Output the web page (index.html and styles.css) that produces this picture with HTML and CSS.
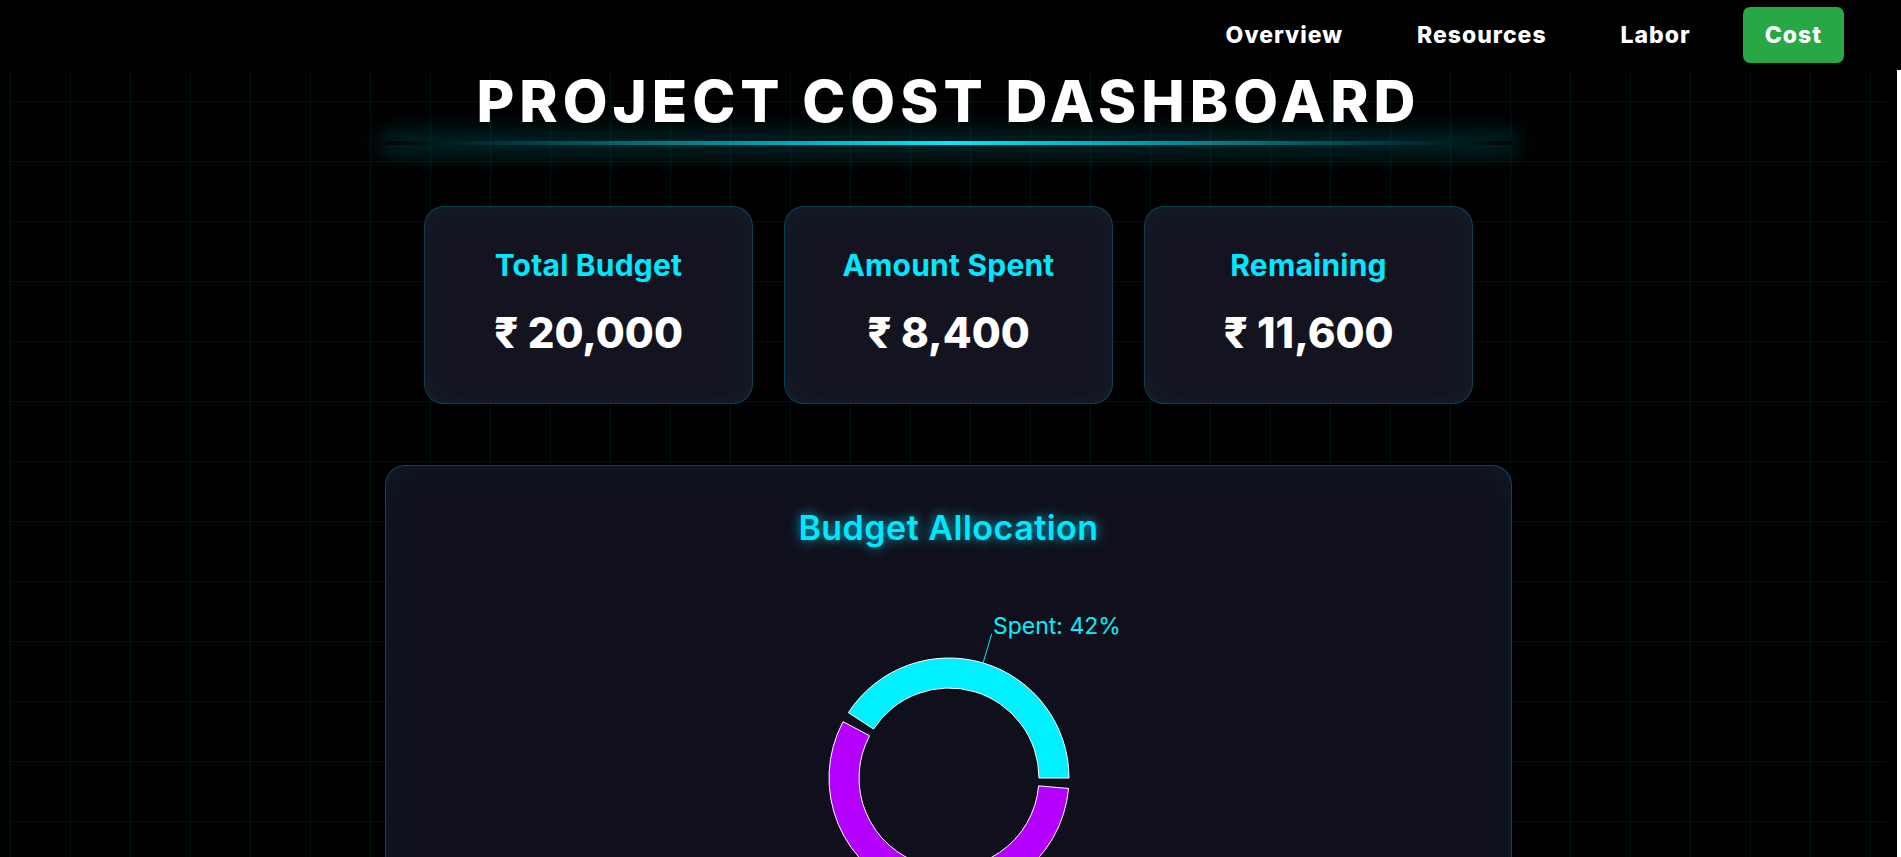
FILE: index.html
```html
<!DOCTYPE html>
<html lang="en">
<head>
<meta charset="utf-8">
<title>Project Cost Dashboard</title>
<link rel="stylesheet" href="styles.css">
</head>
<body>
<nav class="topnav">
  <a class="nav-link" href="#">Overview</a>
  <a class="nav-link" href="#">Resources</a>
  <a class="nav-link" href="#">Labor</a>
  <a class="nav-link active" href="#">Cost</a>
</nav>
<main class="page">
  <div class="grid">
    <div class="container">
      <header class="title-block">
        <h1 class="title">PROJECT COST DASHBOARD</h1>
        <div class="title-bar"></div>
      </header>
      <section class="stats">
        <div class="stat-card">
          <h3 class="stat-label">Total Budget</h3>
          <p class="stat-value">₹ 20,000</p>
        </div>
        <div class="stat-card">
          <h3 class="stat-label">Amount Spent</h3>
          <p class="stat-value">₹ 8,400</p>
        </div>
        <div class="stat-card">
          <h3 class="stat-label">Remaining</h3>
          <p class="stat-value">₹ 11,600</p>
        </div>
      </section>
      <section class="chart-panel">
        <h2 class="chart-title">Budget Allocation</h2>
        <svg class="donut" width="500" height="400" viewBox="0 0 500 400">
          <path class="slice-spent" d="M 370 200 A 120 120 0 0 0 149.36 134.65 L 174.52 150.99 A 90 90 0 0 1 340 200 Z"/>
          <path class="slice-remaining" d="M 144.05 143.66 A 120 120 0 1 0 369.54 210.46 L 339.66 207.85 A 90 90 0 1 1 170.54 157.74 Z"/>
          <path class="label-line spent-line" d="M 284.09 84.94 L 292.61 56.17"/>
          <text class="slice-label spent-text" x="294" y="56">Spent: 42%</text>
          <path class="label-line remaining-line" d="M 215.91 315.06 L 207.4 343.8"/>
          <text class="slice-label remaining-text" x="206" y="356" text-anchor="end">Remaining: 58%</text>
        </svg>
      </section>
    </div>
  </div>
</main>
</body>
</html>
```

FILE: styles.css
```css
* {
  box-sizing: border-box;
}

body {
  margin: 0;
  background: #ffffff;
  font-family: Inter, "Noto Sans", "DejaVu Sans", sans-serif;
}

.topnav {
  height: 70px;
  background: #000;
  display: flex;
  justify-content: flex-end;
  align-items: center;
  gap: 30px;
  padding-right: 57px;
}

.nav-link {
  color: #fff;
  text-decoration: none;
  font-weight: 800;
  font-size: 23px;
  line-height: 30px;
  letter-spacing: 1px;
  padding: 13px 22px;
  border-radius: 7px;
}

.nav-link.active {
  background: #28a745;
}

.page {
  margin-right: 4px;
  padding: 0 10px;
  background: #000;
}

.grid {
  background-image:
    linear-gradient(90deg, rgba(0, 255, 240, 0.07) 1px, transparent 1px),
    linear-gradient(180deg, rgba(0, 255, 240, 0.07) 1px, transparent 1px);
  background-size: 60px 60px;
  background-position: 0 31px;
  padding-bottom: 60px;
}

.container {
  max-width: 1127px;
  margin: 0 auto;
}

.title-block {
  padding-top: 2px;
}

.title {
  margin: 0;
  text-align: center;
  color: #fff;
  font-size: 58px;
  line-height: 58px;
  font-weight: 800;
  letter-spacing: 5px;
}

.title-bar {
  height: 4px;
  margin-top: 11px;
  background: linear-gradient(90deg, #020505 0%, #00eaff 50%, #020505 100%);
  box-shadow: 0 0 24px 5px rgba(0, 220, 240, 0.3);
}

.stats {
  margin-top: 61px;
  display: flex;
  justify-content: center;
  gap: 31px;
}

.stat-card {
  width: 329px;
  height: 198px;
  display: flex;
  flex-direction: column;
  align-items: center;
  justify-content: center;
  padding-bottom: 6px;
  background: #131420;
  border: 1px solid rgba(0, 220, 255, 0.22);
  border-radius: 20px;
  box-shadow: inset 0 0 24px rgba(0, 230, 255, 0.06);
}

.stat-label {
  margin: 0;
  color: #00e8ff;
  font-size: 30px;
  line-height: 36px;
  font-weight: 700;
  letter-spacing: 0.2px;
}

.stat-value {
  margin: 25px 0 0;
  color: #fff;
  font-size: 42px;
  line-height: 50px;
  font-weight: 800;
  letter-spacing: 0;
}

.chart-panel {
  margin-top: 61px;
  padding: 42px 0 60px;
  background: #10101c;
  border: 1px solid rgba(0, 220, 255, 0.28);
  border-radius: 20px;
  box-shadow: inset 0 0 30px rgba(0, 230, 255, 0.06);
}

.chart-title {
  margin: 0;
  text-align: center;
  color: #00e8ff;
  font-size: 34px;
  line-height: 40px;
  font-weight: 600;
  letter-spacing: 0.5px;
  text-shadow: 0 0 12px rgba(0, 232, 255, 0.75);
}

.donut {
  display: block;
  margin: 30px auto 0;
}

.slice-spent {
  fill: #00f0ff;
  stroke: #fff;
  stroke-width: 1;
}

.slice-remaining {
  fill: #b300ff;
  stroke: #fff;
  stroke-width: 1;
}

.label-line {
  fill: none;
  stroke-width: 1;
}

.spent-line {
  stroke: #00f0ff;
}

.remaining-line {
  stroke: #b300ff;
}

.slice-label {
  font-family: Inter, "Noto Sans", sans-serif;
  font-size: 23px;
  font-weight: 400;
}

.spent-text {
  fill: #00f0ff;
}

.remaining-text {
  fill: #b300ff;
}
```
